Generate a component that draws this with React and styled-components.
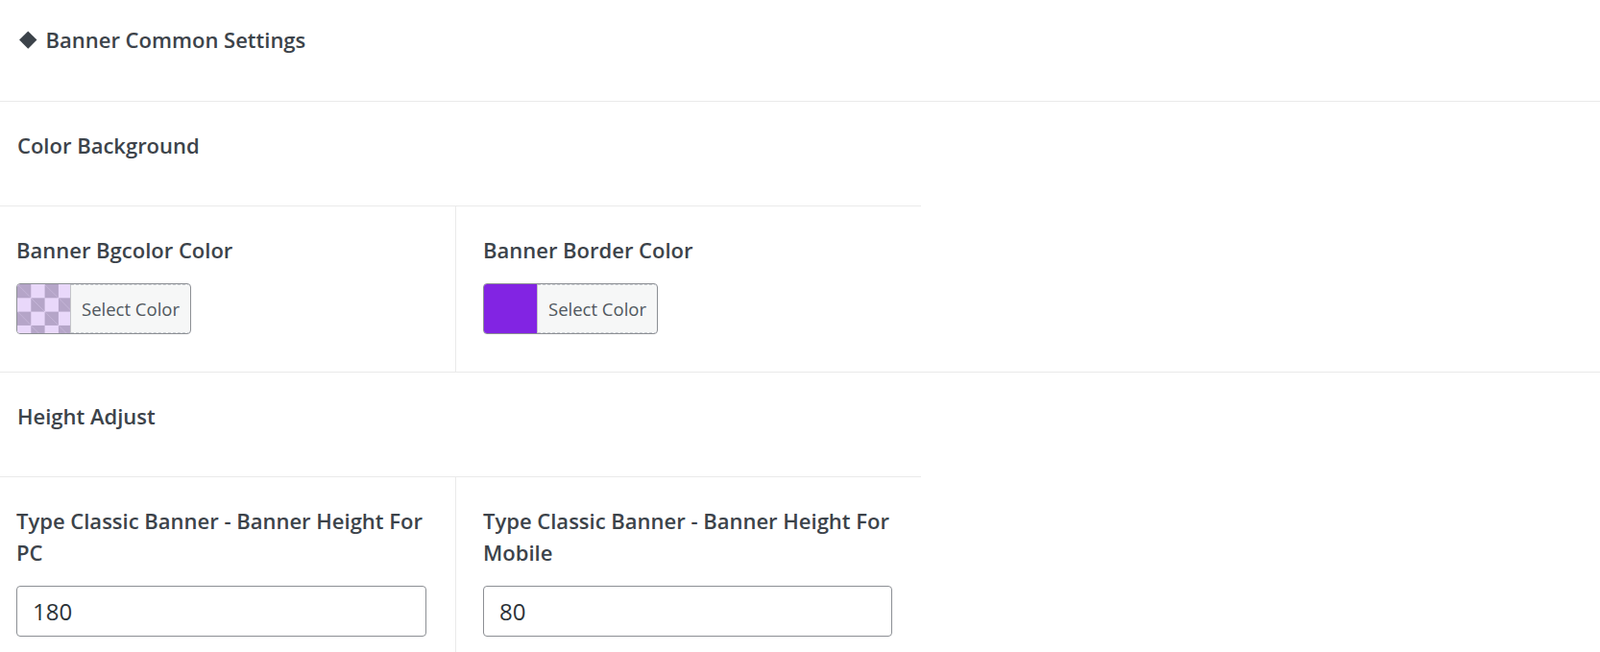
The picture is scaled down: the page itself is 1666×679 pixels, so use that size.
import React from 'react'
import styled, { createGlobalStyle, css } from 'styled-components'

const GlobalStyle = createGlobalStyle`
  html, body {
    margin: 0;
    padding: 0;
    background: #fff;
  }

  body {
    font-family: 'Open Sans', 'Noto Sans', 'Liberation Sans', sans-serif;
    color: #3c434a;
  }
`

const Page = styled.div`
  width: 100%;
  background: #fff;
`

const Header = styled.h2`
  display: flex;
  align-items: center;
  gap: 10px;
  margin: 0;
  padding: 25px 21px 48px;
  font-size: 22px;
  line-height: 32px;
  font-weight: 600;
  color: #3c434a;
  border-bottom: 1px solid #eaeaea;
`

const Diamond = styled.span`
  display: inline-block;
  width: 12.5px;
  height: 12.5px;
  margin: 0 2px 0 2px;
  background: #3c434a;
  transform: rotate(45deg);
`

const Section = styled.section`
  ${props => props.bordered && css`
    border-top: 1px solid #eaeaea;
  `}
`

const SectionTitle = styled.h3`
  width: 959px;
  box-sizing: border-box;
  margin: 0;
  padding: 29px 18px 47px;
  font-size: 22px;
  line-height: 32px;
  font-weight: 600;
  color: #3c434a;
  border-bottom: 1px solid #eaeaea;
`

const FieldRow = styled.div`
  display: grid;
  grid-template-columns: 475px 484px;
`

const Field = styled.div`
  box-sizing: border-box;
  padding: 29px 30px 39px 28px;

  ${props => props.first && css`
    padding-left: 17px;
    border-right: 1px solid #eaeaea;
  `}
`

const Label = styled.label`
  display: block;
  margin-bottom: 18px;
  font-size: 22px;
  line-height: 33px;
  font-weight: 600;
  color: #3c434a;
`

const ColorButton = styled.button`
  display: flex;
  align-items: stretch;
  height: 53px;
  padding: 0;
  overflow: hidden;
  background: #f6f7f7;
  border: 1px solid #8c8f94;
  border-radius: 4px;
  cursor: pointer;
  font-family: inherit;
`

const Swatch = styled.span`
  display: block;
  width: 55px;
  border-right: 1px solid #c3c4c7;
  background-color: ${props => props.color || '#e8d8f8'};

  ${props => props.checker && css`
    background-color: #e9d8fa;
    background-image:
      linear-gradient(45deg, #b5a5c8 25%, transparent 25%, transparent 75%, #b5a5c8 75%),
      linear-gradient(45deg, #b5a5c8 25%, transparent 25%, transparent 75%, #b5a5c8 75%);
    background-size: 28.6px 28.6px;
    background-position: 14.3px 0, 0 14.3px;
  `}
`

const ColorText = styled.span`
  display: flex;
  align-items: center;
  padding: 0 11px 0 11px;
  font-size: 18.5px;
  color: #50575e;
  border-top: 1px dashed #c9ccd1;
  border-bottom: 1px dashed #c9ccd1;
`

const TextInput = styled.input`
  display: block;
  box-sizing: border-box;
  width: 100%;
  height: 53px;
  padding: 0 16px;
  font-family: inherit;
  font-size: 24px;
  color: #2c3338;
  background: #fff;
  border: 1px solid #8c8f94;
  border-radius: 4px;
  outline: none;
`

const ColorField = ({ label, color, checker, first }) => (
  <Field first={first}>
    <Label>{label}</Label>
    <ColorButton type='button'>
      <Swatch color={color} checker={checker} />
      <ColorText>Select Color</ColorText>
    </ColorButton>
  </Field>
)

const NumberField = ({ label, value, first }) => (
  <Field first={first}>
    <Label>{label}</Label>
    <TextInput type='text' defaultValue={value} />
  </Field>
)

export default function App () {
  return (
    <Page>
      <GlobalStyle />
      <Header>
        <Diamond />
        Banner Common Settings
      </Header>

      <Section>
        <SectionTitle>Color Background</SectionTitle>
        <FieldRow>
          <ColorField first checker label='Banner Bgcolor Color' />
          <ColorField color='#8224e3' label='Banner Border Color' />
        </FieldRow>
      </Section>

      <Section bordered>
        <SectionTitle>Height Adjust</SectionTitle>
        <FieldRow>
          <NumberField first label='Type Classic Banner - Banner Height For PC' value='180' />
          <NumberField label='Type Classic Banner - Banner Height For Mobile' value='80' />
        </FieldRow>
      </Section>
    </Page>
  )
}
